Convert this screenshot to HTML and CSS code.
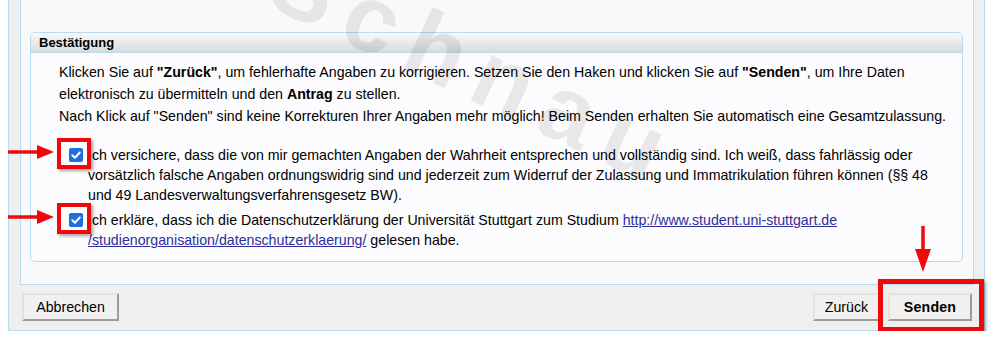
FILE: index.html
```html
<!DOCTYPE html>
<html lang="de">
<head>
  <meta charset="UTF-8" />
  <title>Bestätigung</title>
  <link rel="stylesheet" href="styles.css">
</head>
<body>
  <div class="frame">
    <div class="panel">
      <div class="fieldset">
        <div class="legend">Bestätigung</div>
        <div class="fs-body">
          <p class="intro">Klicken Sie auf <b>"Zurück"</b>, um fehlerhafte Angaben zu korrigieren. Setzen Sie den Haken und klicken Sie auf <b>"Senden"</b>, um Ihre Daten elektronisch zu übermitteln und den <b>Antrag</b> zu stellen.<br>Nach Klick auf "Senden" sind keine Korrekturen Ihrer Angaben mehr möglich! Beim Senden erhalten Sie automatisch eine Gesamtzulassung.</p>

          <div class="check-row">
            <span class="check">
              <svg class="arrow-right" viewBox="0 0 46 16"><path d="M0 8H32" stroke="#ee0a0a" stroke-width="3.5"/><path d="M29 1L46 8L29 15Z" fill="#ee0a0a"/></svg>
              <span class="box"><svg viewBox="0 0 14 14"><path d="M3.3 7.2L5.9 9.7L10.8 4.5" fill="none" stroke="#fff" stroke-width="2" stroke-linecap="round" stroke-linejoin="round"/></svg></span>
              <span class="mark"></span>
            </span>
            <span class="check-text">Ich versichere, dass die von mir gemachten Angaben der Wahrheit entsprechen und vollständig sind. Ich weiß, dass fahrlässig oder vorsätzlich falsche Angaben ordnungswidrig sind und jederzeit zum Widerruf der Zulassung und Immatrikulation führen können (§§ 48 und 49 Landesverwaltungsverfahrensgesetz BW).</span>
          </div>

          <div class="check-row second">
            <span class="check">
              <svg class="arrow-right" viewBox="0 0 46 16"><path d="M0 8H32" stroke="#ee0a0a" stroke-width="3.5"/><path d="M29 1L46 8L29 15Z" fill="#ee0a0a"/></svg>
              <span class="box"><svg viewBox="0 0 14 14"><path d="M3.3 7.2L5.9 9.7L10.8 4.5" fill="none" stroke="#fff" stroke-width="2" stroke-linecap="round" stroke-linejoin="round"/></svg></span>
              <span class="mark"></span>
            </span>
            <span class="check-text">Ich erkläre, dass ich die Datenschutzerklärung der Universität Stuttgart zum Studium <a href="#">http://www.student.uni-stuttgart.de<wbr>/studienorganisation/datenschutzerklaerung/</a> gelesen habe.</span>
          </div>
        </div>
      </div>
    </div>

    <div class="actions">
      <button class="btn btn-cancel">Abbrechen</button>
      <div class="actions-right">
        <button class="btn btn-back">Zurück</button>
        <span class="send-wrap">
          <svg class="arrow-down" viewBox="0 0 16 46"><path d="M8 0V26" stroke="#ee0a0a" stroke-width="3.5"/><path d="M0 23H16L8 46Z" fill="#ee0a0a"/></svg>
          <button class="btn btn-send">Senden</button>
          <span class="mark mark-send"></span>
        </span>
      </div>
    </div>
  </div>

  <div class="watermark">Schnau</div>
</body>
</html>
```

FILE: styles.css
```css
* { box-sizing: border-box; }
body {
  margin: 0;
  background: #fff;
  color: #000;
  font-family: "Liberation Sans", Arial, sans-serif;
  font-size: 14.2px;
  position: relative;
  overflow: hidden;
}
.frame {
  width: 977px;
  margin-left: 8px;
  padding: 0 10px 9px 11px;
  background: #efefef;
  border: 1px solid #b9dcf2;
  border-top: 0;
}
.panel {
  padding: 32px 10px 22px 9px;
  background: #f9f9f9;
  border: 1px solid #b9dcf2;
  border-top: 0;
}
.fieldset {
  border: 1px solid #b6daf2;
  border-radius: 5px;
  background: #fcfcfe;
}
.legend {
  height: 20px;
  padding-left: 8px;
  font-size: 13px;
  line-height: 19px;
  font-weight: bold;
  background: linear-gradient(#f9f9f9, #dadada);
  border-bottom: 1px solid #b6daf2;
  border-radius: 4px 4px 0 0;
}
.fs-body {
  padding: 8px 8px 11px 28px;
}
.intro {
  margin: 0;
  line-height: 22px;
}
.check-row {
  display: flex;
  margin-top: 18px;
  line-height: 20px;
}
.check-row.second {
  margin-top: 5px;
}
.check {
  position: relative;
  flex: none;
  width: 14px;
  height: 14px;
  margin: 3px 5px 0 10px;
}
.box {
  display: block;
  width: 14px;
  height: 14px;
  border-radius: 2px;
  background: #1f6fde;
}
.box svg {
  display: block;
  width: 14px;
  height: 14px;
}
.check-text a {
  color: #2e2e9c;
}
.mark {
  position: absolute;
  left: -12px;
  top: -10px;
  width: 34px;
  height: 31px;
  border: 4px solid #ee0a0a;
  box-shadow: 2px 2px 3px rgba(0, 0, 0, 0.35);
}
.arrow-right {
  position: absolute;
  left: -61px;
  top: -4px;
  width: 46px;
  height: 16px;
}
.actions {
  display: flex;
  justify-content: space-between;
  padding: 8px 2px 0 2px;
}
.actions-right {
  display: flex;
  gap: 8px;
}
.btn {
  height: 28px;
  padding: 0;
  font-family: "Liberation Sans", Arial, sans-serif;
  font-size: 14.2px;
  color: #000;
  background: #f0f0f0;
  border: 2px solid;
  border-color: #e2e2e2 #9c9c9c #9c9c9c #e2e2e2;
}
.btn-cancel { width: 97px; }
.btn-back { width: 67px; }
.btn-send {
  width: 84px;
  font-weight: bold;
  letter-spacing: 0.2px;
}
.send-wrap {
  position: relative;
  display: block;
}
.mark-send {
  left: -10px;
  top: -14px;
  width: 106px;
  height: 53px;
  border-width: 5px;
}
.arrow-down {
  position: absolute;
  left: 27px;
  top: -67px;
  width: 16px;
  height: 46px;
}
.watermark {
  position: absolute;
  left: 300px;
  top: -75px;
  font-size: 95px;
  font-weight: bold;
  letter-spacing: 16px;
  color: rgba(0, 0, 0, 0.08);
  transform: rotate(25deg);
  transform-origin: left top;
  pointer-events: none;
}
```
